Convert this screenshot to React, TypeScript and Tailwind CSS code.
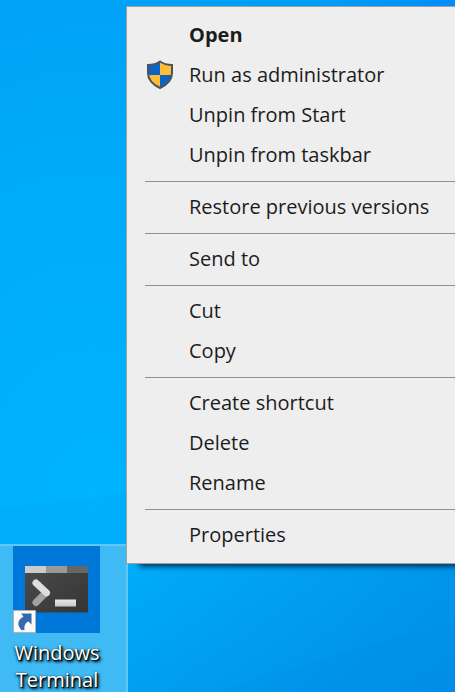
type Entry = { label: string; strong?: boolean; shield?: boolean };

const groups: Entry[][] = [
  [
    { label: "Open", strong: true },
    { label: "Run as administrator", shield: true },
    { label: "Unpin from Start" },
    { label: "Unpin from taskbar" },
  ],
  [{ label: "Restore previous versions" }],
  [{ label: "Send to" }],
  [{ label: "Cut" }, { label: "Copy" }],
  [{ label: "Create shortcut" }, { label: "Delete" }, { label: "Rename" }],
  [{ label: "Properties" }],
];

function Shield() {
  return (
    <svg viewBox="0 0 28 30" className="h-[30px] w-7" aria-hidden="true">
      <defs>
        <clipPath id="shield">
          <path d="M14 1.500C10.500 4 6 5 2 5V13C2 20 6.500 24.500 14 28C21.500 24.500 26 20 26 13V5C22 5 17.500 4 14 1.500Z" />
        </clipPath>
      </defs>
      <g clipPath="url(#shield)">
        <path fill="#0864c5" d="M0 0h14v15H0zM14 15h14v15H14z" />
        <path fill="#ffbd36" d="M14 0h14v15H14zM0 15h14v15H0z" />
      </g>
      <path
        d="M14 1.500C10.500 4 6 5 2 5V13C2 20 6.500 24.500 14 28C21.500 24.500 26 20 26 13V5C22 5 17.500 4 14 1.500Z"
        fill="none"
        stroke="#505356"
        strokeWidth="2"
      />
    </svg>
  );
}

function TerminalIcon() {
  return (
    <svg viewBox="0 0 87 87" className="size-[87px] shrink-0" aria-hidden="true">
      <defs>
        <linearGradient id="screen" x1="0" y1="0" x2="1" y2="1">
          <stop stopColor="#4b4b4b" />
          <stop offset="1" stopColor="#353535" />
        </linearGradient>
        <linearGradient id="prompt" x1="0" y1="0" x2="0" y2="1">
          <stop stopColor="#e8e8e8" />
          <stop offset="1" stopColor="#c8c8c8" />
        </linearGradient>
      </defs>
      <path fill="#0078d9" d="M0 0h87v87H0z" />
      <path fill="url(#screen)" d="M12 20h63v46.500H12z" />
      <path fill="#ccc" d="M12 20h21v7H12z" />
      <path fill="#999" d="M33 20h21v7H33z" />
      <path fill="#666" d="M54 20h21v7H54z" />
      <path d="M23 56.500L33 46.500" stroke="#a2a2a2" strokeWidth="7" strokeLinecap="round" />
      <path d="M23 37L33.500 46.800" stroke="#dedede" strokeWidth="7" strokeLinecap="round" />
      <path fill="url(#prompt)" d="M42 53.500h21v7H42z" />
      <path fill="#fafafa" stroke="#b2b2b2" strokeWidth="1" d="M.5 64.500h22v22H.5z" />
      <path
        fill="#3569ac"
        d="M8 67.500H18.500V78.500L15.500 75.500C12.500 76.500 11 79.500 11.500 84H8.500C4 79 4 74.500 10.500 70.500Z"
      />
    </svg>
  );
}

export default function App() {
  return (
    <main className="relative flex min-h-screen flex-col items-start justify-end overflow-hidden bg-[radial-gradient(ellipse_at_20%_72%,#00b4ff_0%,#00aaf8_50%,#009cf7_85%,#008cfa_100%)] font-['Open_Sans','Noto_Sans',sans-serif]">
      <div
        className="absolute inset-0 bg-[linear-gradient(150deg,transparent_65%,#008fe8_100%)]"
        aria-hidden="true"
      />
      <svg
        viewBox="0 0 455 692"
        preserveAspectRatio="none"
        className="absolute inset-0 h-full w-full"
        aria-hidden="true"
      >
        <path d="M0 509L126 493L455 450V692H0Z" fill="#0090f0" fillOpacity=".1" />
        <path d="M215 692L455 620V692Z" fill="#0080e0" fillOpacity=".08" />
      </svg>
      <button
        type="button"
        className="relative flex h-[148px] w-32 flex-col items-start border-t-2 border-r-2 border-[#61c7f9] bg-[#3fbaf5] pl-[13px] text-white"
      >
        <TerminalIcon />
        <span className="mt-[6px] w-[88px] text-center text-[20px] leading-[27px] [text-shadow:1px_1px_1px_#000,2px_2px_3px_#000,0_1px_3px_#000]">
          Windows Terminal
        </span>
      </button>

      <div
        role="menu"
        aria-label="Windows Terminal"
        className="absolute top-[6px] -right-px left-[126px] border border-[#a0a0a0] bg-[#eee] py-2 text-[20px] leading-6 text-[#1c1c1c] shadow-[11px_5px_5px_-2px_#003e66]"
      >
        {groups.map((group, index) => (
          <div key={group[0].label} role="group">
            {index > 0 && <hr className="mt-[6px] mb-[5px] ml-[18px] border-t border-[#919191]" />}
            {group.map((entry) => (
              <button
                key={entry.label}
                type="button"
                role="menuitem"
                className="flex h-10 w-full items-center text-left whitespace-nowrap"
              >
                <span className="flex w-[62px] shrink-0 pl-[19px]">{entry.shield && <Shield />}</span>
                <span className={entry.strong ? "font-bold" : ""}>{entry.label}</span>
              </button>
            ))}
          </div>
        ))}
      </div>
    </main>
  );
}
